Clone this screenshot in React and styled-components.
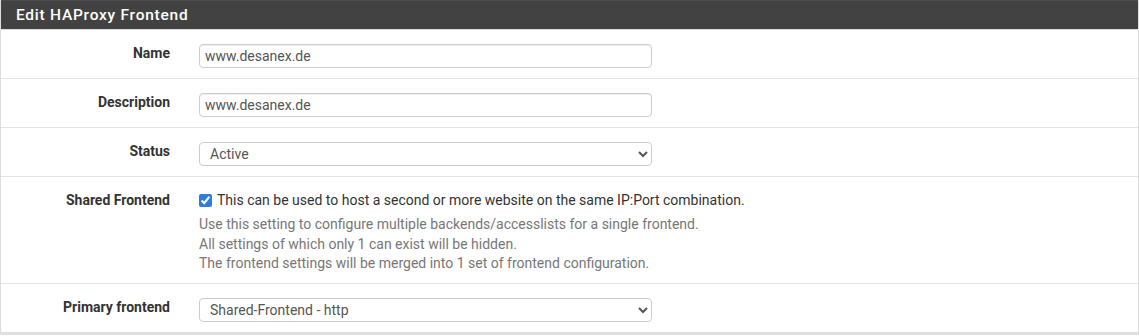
import React, { useState } from "react";
import styled, { createGlobalStyle } from "styled-components";

const GlobalStyle = createGlobalStyle`
  body {
    margin: 0;
    background: #ffffff;
    font-family: Roboto, "Liberation Sans", sans-serif;
    font-size: 14px;
    color: #333333;
  }
`;

const StPanel = styled.div`
  border: 1px solid #dddddd;
  border-top: none;
  border-bottom: 3px solid #e0e0e0;
  background: #ffffff;
`;

const StHeading = styled.div`
  box-sizing: border-box;
  height: 30px;
  display: flex;
  align-items: center;
  padding-left: 15px;
  background: #424242;
  border-top: 1px solid #4d4d4d;
  border-bottom: 1px solid #dddddd;
`;

const StTitle = styled.h2`
  margin: 0;
  color: #ffffff;
  font-size: 15.5px;
  font-weight: 500;
  letter-spacing: 0.75px;
`;

const StRow = styled.div`
  display: grid;
  grid-template-columns: 169px 453px;
  column-gap: 29px;
  padding: 13px 0 ${(p) => (p.$tall ? "9px" : "10px")};
  border-bottom: ${(p) => (p.$last ? "none" : "1px solid #e3e3e3")};
`;

const StLabel = styled.label`
  text-align: right;
  font-weight: 700;
  line-height: 20px;
  color: #333333;
`;

const StInput = styled.input`
  box-sizing: border-box;
  margin-top: 1px;
  width: 100%;
  height: 24px;
  padding: 0 5px;
  border: 1px solid #cccccc;
  border-radius: 4px;
  box-shadow: inset 0 1px 1px rgba(0, 0, 0, 0.075);
  font-family: Roboto, "Liberation Sans", sans-serif;
  font-size: 14px;
  color: #555555;
  outline: none;
`;

const StSelect = styled.select`
  box-sizing: border-box;
  margin-top: 1px;
  width: 100%;
  height: 24px;
  padding: 0 6px;
  border: 1px solid #cccccc;
  border-radius: 4px;
  background: #ffffff;
  font-family: Roboto, "Liberation Sans", sans-serif;
  font-size: 14px;
  color: #555555;
  outline: none;
`;

const StCheckLine = styled.label`
  display: flex;
  align-items: center;
  gap: 5px;
  width: 640px;
  line-height: 20px;
  color: #333333;
  white-space: nowrap;
`;

const StCheckbox = styled.input`
  margin: 0;
  width: 13px;
  height: 13px;
  accent-color: #2f7bdf;
`;

const StHelp = styled.div`
  margin-top: 5px;
  width: 640px;
  color: #777777;
  line-height: 19.6px;
`;

const App = () => {
  const [form, setForm] = useState({
    name: "www.desanex.de",
    description: "www.desanex.de",
    status: "active",
    shared: true,
    primary: "shared-http",
  });

  const onChangeHandler = (event) => {
    const { name, value, type, checked } = event.target;
    setForm({ ...form, [name]: type === "checkbox" ? checked : value });
  };

  return (
    <>
      <GlobalStyle />
      <StPanel>
        <StHeading>
          <StTitle>Edit HAProxy Frontend</StTitle>
        </StHeading>
        <StRow>
          <StLabel>Name</StLabel>
          <StInput name="name" value={form.name} onChange={onChangeHandler} />
        </StRow>
        <StRow>
          <StLabel>Description</StLabel>
          <StInput
            name="description"
            value={form.description}
            onChange={onChangeHandler}
          />
        </StRow>
        <StRow>
          <StLabel>Status</StLabel>
          <StSelect name="status" value={form.status} onChange={onChangeHandler}>
            <option value="active">Active</option>
            <option value="disabled">Disabled</option>
          </StSelect>
        </StRow>
        <StRow $tall>
          <StLabel>Shared Frontend</StLabel>
          <div>
            <StCheckLine>
              <StCheckbox
                type="checkbox"
                name="shared"
                checked={form.shared}
                onChange={onChangeHandler}
              />
              This can be used to host a second or more website on the same
              IP:Port combination.
            </StCheckLine>
            <StHelp>
              Use this setting to configure multiple backends/accesslists for a
              single frontend.
              <br />
              All settings of which only 1 can exist will be hidden.
              <br />
              The frontend settings will be merged into 1 set of frontend
              configuration.
            </StHelp>
          </div>
        </StRow>
        <StRow $last>
          <StLabel>Primary frontend</StLabel>
          <StSelect
            name="primary"
            value={form.primary}
            onChange={onChangeHandler}
          >
            <option value="shared-http">Shared-Frontend - http</option>
          </StSelect>
        </StRow>
      </StPanel>
    </>
  );
};

export default App;
